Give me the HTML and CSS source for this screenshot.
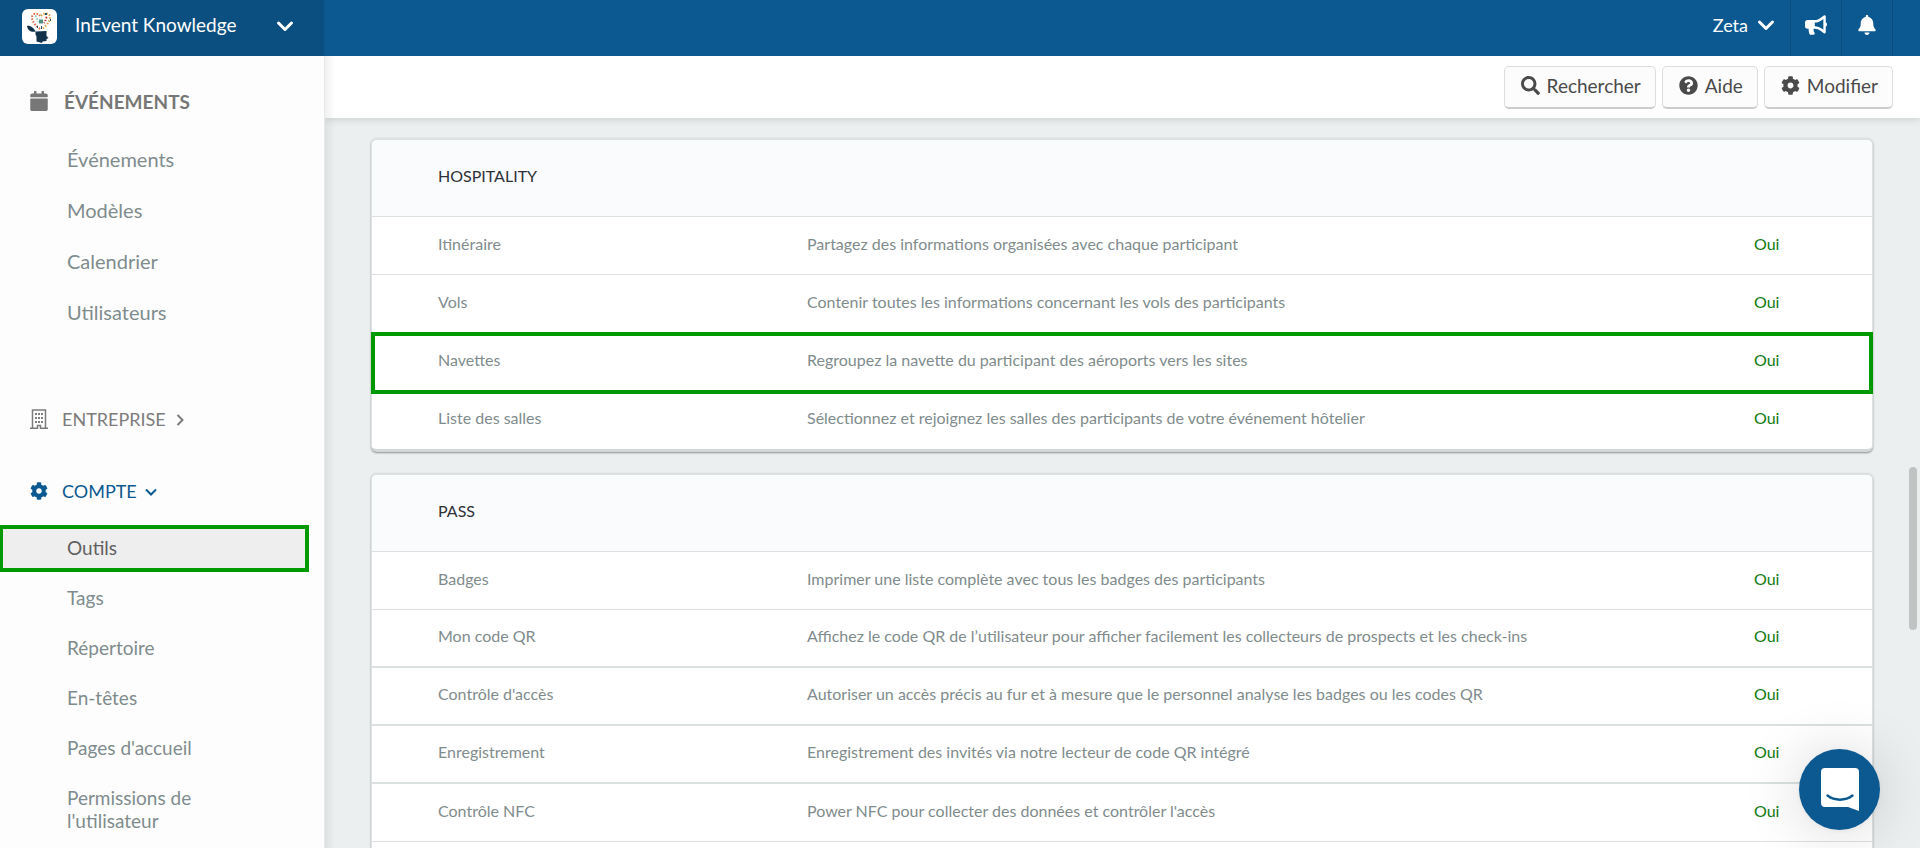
FILE: index.html
```html
<!DOCTYPE html>
<html lang="fr">
<head>
<meta charset="utf-8">
<title>InEvent Knowledge</title>
<link rel="stylesheet" href="styles.css">
</head>
<body>
<svg class="defs" aria-hidden="true">
  <symbol id="cog" viewBox="0 0 512 512"><path d="M487.4 315.7l-42.6-24.6c4.3-23.2 4.3-47 0-70.2l42.6-24.6c4.9-2.8 7.1-8.6 5.5-14-11.1-35.6-30-67.8-54.7-94.6-3.8-4.1-10-5.1-14.8-2.3L380.8 110c-17.9-15.4-38.5-27.3-60.8-35.1V25.8c0-5.6-3.9-10.5-9.4-11.7-36.7-8.2-74.3-7.8-109.2 0-5.5 1.2-9.4 6.1-9.4 11.7V75c-22.2 7.9-42.8 19.8-60.8 35.1L88.7 85.5c-4.9-2.8-11-1.9-14.8 2.3-24.7 26.7-43.6 58.9-54.7 94.6-1.7 5.4.6 11.2 5.5 14L67.3 221c-4.3 23.2-4.3 47 0 70.2l-42.6 24.6c-4.9 2.8-7.1 8.6-5.5 14 11.1 35.6 30 67.8 54.7 94.6 3.8 4.1 10 5.1 14.8 2.3l42.6-24.6c17.9 15.4 38.5 27.3 60.8 35.1v49.2c0 5.6 3.9 10.5 9.4 11.7 36.7 8.2 74.3 7.8 109.2 0 5.5-1.2 9.4-6.1 9.4-11.7v-49.2c22.2-7.9 42.8-19.8 60.8-35.1l42.6 24.6c4.9 2.8 11 1.9 14.8-2.3 24.7-26.7 43.6-58.9 54.7-94.6 1.5-5.5-.7-11.3-5.6-14.1zM256 336c-44.1 0-80-35.9-80-80s35.9-80 80-80 80 35.9 80 80-35.9 80-80 80z"/></symbol>
  <symbol id="chevron" viewBox="0 0 18 18"><path d="M2.500 6 9 12.500 15.500 6" fill="none" stroke="currentColor" stroke-width="3" stroke-linecap="round" stroke-linejoin="round"/></symbol>
</svg>

<header class="topbar">
  <button class="company" type="button">
    <svg class="logo" viewBox="0 0 35 35" aria-hidden="true">
      <rect width="35" height="35" rx="6" fill="#fff"/>
      <path d="M5 17c3-1 7 2 8.500 5.500-4 1-8-1-8.500-5.500zM13.500 22.500 24.500 22v5l2 2-2 1v2l-4 .5L20 34l-5.500-1.500v-5l-1-2z" fill="#12324a"/>
      <g fill="none" stroke-width="2" stroke-dasharray="1.500 1.500">
        <path d="M18 20c-4-3-8-7-8-12 0-3 5-5 8-1" stroke="#e0673f"/>
        <path d="M19 7c3-4 9-3 9 1 0 5-4 9-8 12" stroke="#d8a04a"/>
        <path d="M13 7c2 1 2 4 3 6" stroke="#8fc7b5"/>
        <path d="M25 8c-2 2-1 4-3 6" stroke="#c43b33"/>
      </g>
      <path d="M17 10.500h4v4h-4z" fill="#4f8f7d"/>
      <path d="M15 17h1v2h-1zM19 17h1v3h-1zM23 4h2v2h-2zM28 10h1v2h-1z" fill="#26566b"/>
    </svg>
    <span>InEvent Knowledge</span>
    <svg class="chev" aria-hidden="true"><use href="#chevron"/></svg>
  </button>
  <div class="topbar-right">
    <button class="user" type="button">Zeta <svg class="chev" aria-hidden="true"><use href="#chevron"/></svg></button>
    <button class="tool" type="button" aria-label="Annonces"><svg class="horn" viewBox="0 0 576 512"><path d="M576 240c0-23.630-12.950-44.040-32-55.120V32.010C544 23.260 537.020 0 512 0c-7.120 0-14.190 2.380-19.980 7.020l-85.030 68.030C364.280 109.190 310.660 128 256 128H64c-35.350 0-64 28.650-64 64v96c0 35.350 28.650 64 64 64h33.700c-1.390 10.480-2.180 21.140-2.180 32 0 39.770 9.260 77.350 25.560 110.940 5.190 10.690 16.520 17.060 28.400 17.060h74.280c26.050 0 41.690-29.840 25.900-50.560-16.400-21.520-26.150-48.360-26.150-77.440 0-11.110 1.620-21.790 4.410-32H256c54.660 0 108.280 18.810 150.980 52.950l85.030 68.030a32.023 32.023 0 0 0 19.980 7.020c24.920 0 32-22.780 32-32V295.130C563.050 284.040 576 263.630 576 240zm-96 141.420l-33.050-26.440C392.950 311.780 325.120 288 256 288v-96c69.120 0 136.950-23.780 190.950-66.980L480 98.580v282.840z"/></svg></button>
    <button class="tool last" type="button" aria-label="Notifications"><svg class="bell" viewBox="0 0 448 512"><path d="M224 512c35.320 0 63.970-28.650 63.970-64H160.030c0 35.350 28.650 64 63.970 64zm215.390-149.710c-19.320-20.760-55.470-51.990-55.470-154.290 0-77.700-54.480-139.900-127.940-155.160V32c0-17.670-14.320-32-31.980-32s-31.980 14.330-31.980 32v20.840C118.560 68.100 64.080 130.300 64.080 208c0 102.300-36.150 133.530-55.470 154.290-6 6.450-8.660 14.160-8.610 21.710.11 16.400 12.980 32 32.100 32h383.800c19.120 0 32-15.600 32.100-32 .05-7.550-2.610-15.270-8.610-21.710z"/></svg></button>
  </div>
</header>

<div class="body">
  <nav class="sidebar">
    <h2 class="group strong"><svg class="gicon" viewBox="0 0 448 512" aria-hidden="true"><path d="M12 192h424c6.600 0 12 5.400 12 12v260c0 26.500-21.500 48-48 48H48c-26.500 0-48-21.500-48-48V204c0-6.600 5.400-12 12-12zm436-44v-36c0-26.500-21.500-48-48-48h-48V12c0-6.600-5.400-12-12-12h-40c-6.600 0-12 5.400-12 12v52H160V12c0-6.600-5.400-12-12-12h-40c-6.600 0-12 5.400-12 12v52H48C21.500 64 0 85.500 0 112v36c0 6.600 5.400 12 12 12h424c6.600 0 12-5.400 12-12z"/></svg>ÉVÉNEMENTS</h2>
    <ul class="links events">
      <li><a href="#">Événements</a></li>
      <li><a href="#">Modèles</a></li>
      <li><a href="#">Calendrier</a></li>
      <li><a href="#">Utilisateurs</a></li>
    </ul>
    <button class="group" type="button"><svg class="gicon" viewBox="0 0 18 20" aria-hidden="true"><path d="M2.500 19V1h13v18M0 19.250h7.500V16.500h3v2.750H18" fill="none" stroke="currentColor" stroke-width="1.500"/><path d="M5 4h2v2H5zM8 4h2v2H8zM11 4h2v2h-2zM5 8h2v2H5zM8 8h2v2H8zM11 8h2v2h-2zM5 12h2v2H5zM8 12h2v2H8zM11 12h2v2h-2z"/></svg>ENTREPRISE<svg class="mini right" viewBox="0 0 12 12" aria-hidden="true"><path d="m3.500 1 5 5-5 5" fill="none" stroke="currentColor" stroke-width="2"/></svg></button>
    <button class="group open" type="button"><svg class="gicon" aria-hidden="true"><use href="#cog"/></svg>COMPTE<svg class="mini" viewBox="0 0 12 12" aria-hidden="true"><path d="m1 3.500 5 5 5-5" fill="none" stroke="currentColor" stroke-width="2"/></svg></button>
    <ul class="links account">
      <li class="active"><a href="#">Outils</a></li>
      <li><a href="#">Tags</a></li>
      <li><a href="#">Répertoire</a></li>
      <li><a href="#">En-têtes</a></li>
      <li><a href="#">Pages d'accueil</a></li>
      <li><a href="#">Permissions de l'utilisateur</a></li>
    </ul>
  </nav>

  <main class="content">
    <div class="actions">
      <button type="button"><svg viewBox="0 0 512 512" aria-hidden="true"><path d="M505 442.700L405.300 343c-4.500-4.500-10.600-7-17-7H372c27.600-35.300 44-79.700 44-128C416 93.100 322.900 0 208 0S0 93.100 0 208s93.100 208 208 208c48.300 0 92.700-16.400 128-44v16.300c0 6.400 2.500 12.500 7 17l99.700 99.700c9.400 9.400 24.600 9.400 33.900 0l28.300-28.300c9.400-9.400 9.400-24.600.1-34zM208 336c-70.700 0-128-57.200-128-128 0-70.700 57.200-128 128-128 70.700 0 128 57.200 128 128 0 70.700-57.200 128-128 128z"/></svg>Rechercher</button>
      <button type="button"><svg viewBox="0 0 512 512" aria-hidden="true"><path d="M504 256c0 136.997-111.043 248-248 248S8 392.997 8 256C8 119.083 119.043 8 256 8s248 111.083 248 248zM262.655 90c-54.497 0-89.255 22.957-116.549 63.758-3.536 5.286-2.353 12.415 2.715 16.258l34.699 26.310c5.205 3.947 12.621 3.008 16.665-2.122 17.864-22.658 30.113-35.797 57.303-35.797 20.429 0 45.698 13.148 45.698 32.958 0 14.976-12.363 22.667-32.534 33.976C247.128 238.528 216 254.941 216 296v4c0 6.627 5.373 12 12 12h56c6.627 0 12-5.373 12-12v-1.333c0-28.462 83.186-29.647 83.186-106.667 0-58.002-60.165-102-116.531-102zM256 338c-25.365 0-46 20.635-46 46 0 25.364 20.635 46 46 46s46-20.636 46-46c0-25.365-20.635-46-46-46z"/></svg>Aide</button>
      <button type="button"><svg aria-hidden="true"><use href="#cog"/></svg>Modifier</button>
    </div>

    <div class="cards">
      <table class="card">
        <colgroup><col class="c-name"><col class="c-desc"><col class="c-state"></colgroup>
        <thead><tr><th colspan="3">HOSPITALITY</th></tr></thead>
        <tbody>
          <tr><td>Itinéraire</td><td>Partagez des informations organisées avec chaque participant</td><td>Oui</td></tr>
          <tr><td>Vols</td><td>Contenir toutes les informations concernant les vols des participants</td><td>Oui</td></tr>
          <tr class="marked"><td>Navettes</td><td>Regroupez la navette du participant des aéroports vers les sites</td><td>Oui</td></tr>
          <tr><td>Liste des salles</td><td>Sélectionnez et rejoignez les salles des participants de votre événement hôtelier</td><td>Oui</td></tr>
        </tbody>
      </table>

      <table class="card">
        <colgroup><col class="c-name"><col class="c-desc"><col class="c-state"></colgroup>
        <thead><tr><th colspan="3">PASS</th></tr></thead>
        <tbody>
          <tr><td>Badges</td><td>Imprimer une liste complète avec tous les badges des participants</td><td>Oui</td></tr>
          <tr class="heavy"><td>Mon code QR</td><td>Affichez le code QR de l’utilisateur pour afficher facilement les collecteurs de prospects et les check-ins</td><td>Oui</td></tr>
          <tr class="heavy"><td>Contrôle d'accès</td><td>Autoriser un accès précis au fur et à mesure que le personnel analyse les badges ou les codes QR</td><td>Oui</td></tr>
          <tr class="heavy"><td>Enregistrement</td><td>Enregistrement des invités via notre lecteur de code QR intégré</td><td>Oui</td></tr>
          <tr><td>Contrôle NFC</td><td>Power NFC pour collecter des données et contrôler l'accès</td><td>Oui</td></tr>
          <tr><td></td><td></td><td></td></tr>
        </tbody>
      </table>
    </div>
    <div class="scroll-thumb"></div>
  </main>
</div>

<button class="chat" type="button" aria-label="Messagerie">
  <svg viewBox="0 0 38 43"><path d="M4 0h30a4 4 0 0 1 4 4v39l-11-4H4a4 4 0 0 1-4-4V4a4 4 0 0 1 4-4z" fill="#fff"/><path d="M6.500 27.500c7 5.500 18 5.500 25 0" fill="none" stroke="#0c5991" stroke-width="2.500" stroke-linecap="round"/></svg>
</button>
</body>
</html>
```
FILE: styles.css
```css
* { box-sizing: border-box; }

body {
  margin: 0;
  height: 100vh;
  display: flex;
  flex-direction: column;
  overflow: hidden;
  font-family: Lato, "Liberation Sans", sans-serif;
  background: #ebeff0;
  color: #7f8c8d;
}

button {
  font: inherit;
  color: inherit;
  background: none;
  border: 0;
  padding: 0;
  cursor: pointer;
}

svg { fill: currentColor; flex: none; }
.defs { position: absolute; width: 0; height: 0; }

/* Top bar */
.topbar {
  flex: none;
  display: flex;
  justify-content: space-between;
  height: 56px;
  padding-right: 27px;
  background: #0c5991;
  color: #fff;
  font-size: 18px;
}
.company {
  display: flex;
  align-items: center;
  width: 324px;
  padding: 0 30px 4px 22px;
  background: #0b4f80;
  font-size: 19px;
}
.company span { margin-left: 18px; padding-bottom: 3px; }
.company .chev { margin-left: auto; }
.logo { width: 35px; height: 35px; }
.chev { width: 18px; height: 18px; }
.topbar-right { display: flex; }
.user {
  display: flex;
  align-items: center;
  gap: 9px;
  padding: 0 15px 6px 0;
}
.tool {
  display: flex;
  align-items: center;
  justify-content: center;
  width: 51px;
  padding-bottom: 6px;
  border-left: 1px solid #0a4c7c;
}
.tool.last { width: 52px; border-right: 1px solid #0a4c7c; }
.horn { width: 22px; height: 20px; }
.bell { width: 18px; height: 20px; }

.body { flex: 1; display: flex; min-height: 0; }

/* Sidebar */
.sidebar {
  position: relative;
  z-index: 2;
  flex: none;
  width: 325px;
  overflow: hidden;
  padding-top: 31px;
  background: #fdfdfd;
  border-right: 1px solid #e6eaea;
}
.body::before {
  content: "";
  position: absolute;
  z-index: 2;
  top: 56px;
  bottom: 0;
  left: 325px;
  width: 10px;
  background: linear-gradient(to right, rgba(0, 0, 0, 0.06), transparent);
}
.group {
  display: flex;
  align-items: center;
  margin: 0 0 0 30px;
  height: 28px;
  font-size: 18px;
  font-weight: 400;
  color: #7c7c7c;
}
.group.strong { font-size: 19px; font-weight: 700; color: #777; }
.group.open { margin-top: 44px; color: #0c5991; }
.gicon { width: 18px; height: 20px; margin-right: 14px; }
.strong .gicon { margin-right: 16px; }
.mini { width: 12px; height: 12px; margin: 2px 0 0 8px; }
.links { list-style: none; margin: 0; padding: 0; font-size: 20px; line-height: 23px; }
.links a { display: block; width: 250px; padding-left: 67px; color: inherit; text-decoration: none; }
.events { padding: 19px 0 67px; }
.events a { padding-top: 14px; padding-bottom: 14px; }
.account { padding-top: 20px; font-size: 19px; }
.account a { padding-top: 13px; padding-bottom: 14px; }
.active {
  width: 309px;
  margin-bottom: 1px;
  background: #eee;
  color: #606060;
  border: 4px solid #009a00;
  border-left-width: 3px;
}
.account .active a { padding: 7px 0 9px 64px; }

/* Content */
.content { position: relative; flex: 1; min-width: 0; overflow: hidden; }
.actions {
  display: flex;
  justify-content: flex-end;
  gap: 6px;
  padding: 10px 27px 9px;
  background: #fff;
  box-shadow: 0 1px 8px rgba(0, 0, 0, 0.15);
}
.actions button {
  display: flex;
  align-items: center;
  gap: 7px;
  height: 43px;
  padding: 0 14px 3px 16px;
  border: 1px solid #ddd;
  border-bottom: 2px solid #ccc;
  border-radius: 5px;
  background: #fcfcfc;
  color: #4a4a4a;
  font-size: 19px;
}
.actions svg { width: 19px; height: 19px; }

.cards {
  display: flex;
  flex-direction: column;
  gap: 21px;
  padding: 20px 47px 0 46px;
}
.card {
  width: 100%;
  table-layout: fixed;
  border-spacing: 0;
  border: 1px solid #dde1e1;
  border-top-width: 2px;
  border-bottom: 3px solid #d2d7d7;
  border-radius: 6px;
  background: #fff;
  box-shadow: 0 1px 2px rgba(0, 0, 0, 0.4);
  font-size: 16px;
  line-height: 20px;
}
.c-name { width: 29%; }
.c-state { width: 118px; }
.card th, .card td {
  padding: 0 0 4px;
  text-align: left;
  font-weight: 400;
  border-bottom: 1px solid #dbe0e0;
}
.card th {
  height: 77px;
  padding-left: 66px;
  background: #fafbfd;
  border-radius: 5px 5px 0 0;
  color: #2f3138;
}
.card td { height: 58px; }
.card td:first-child { padding-left: 66px; }
.card td:last-child { color: #117a11; }
.card .heavy td { border-bottom-width: 2px; }
.card tr:last-child td { border-bottom-color: transparent; }
.card thead tr:last-child th { border-bottom-color: #dbe0e0; }
.marked { position: relative; }
.marked td:first-child::after {
  content: "";
  position: absolute;
  inset: -1px -1px -3px -1px;
  border: 4px solid #009a00;
}

.scroll-thumb {
  position: absolute;
  top: 411px;
  right: 3px;
  width: 8px;
  height: 163px;
  border-radius: 4px;
  background: #c1c3c3;
}

.chat {
  position: fixed;
  z-index: 3;
  right: 40px;
  bottom: 18px;
  display: flex;
  align-items: center;
  justify-content: center;
  width: 81px;
  height: 81px;
  border-radius: 50%;
  background: #0c5991;
  box-shadow: 0 2px 60px rgba(0, 0, 0, 0.16), 0 1px 6px rgba(0, 0, 0, 0.06);
}
.chat svg { width: 38px; height: 43px; }
```
